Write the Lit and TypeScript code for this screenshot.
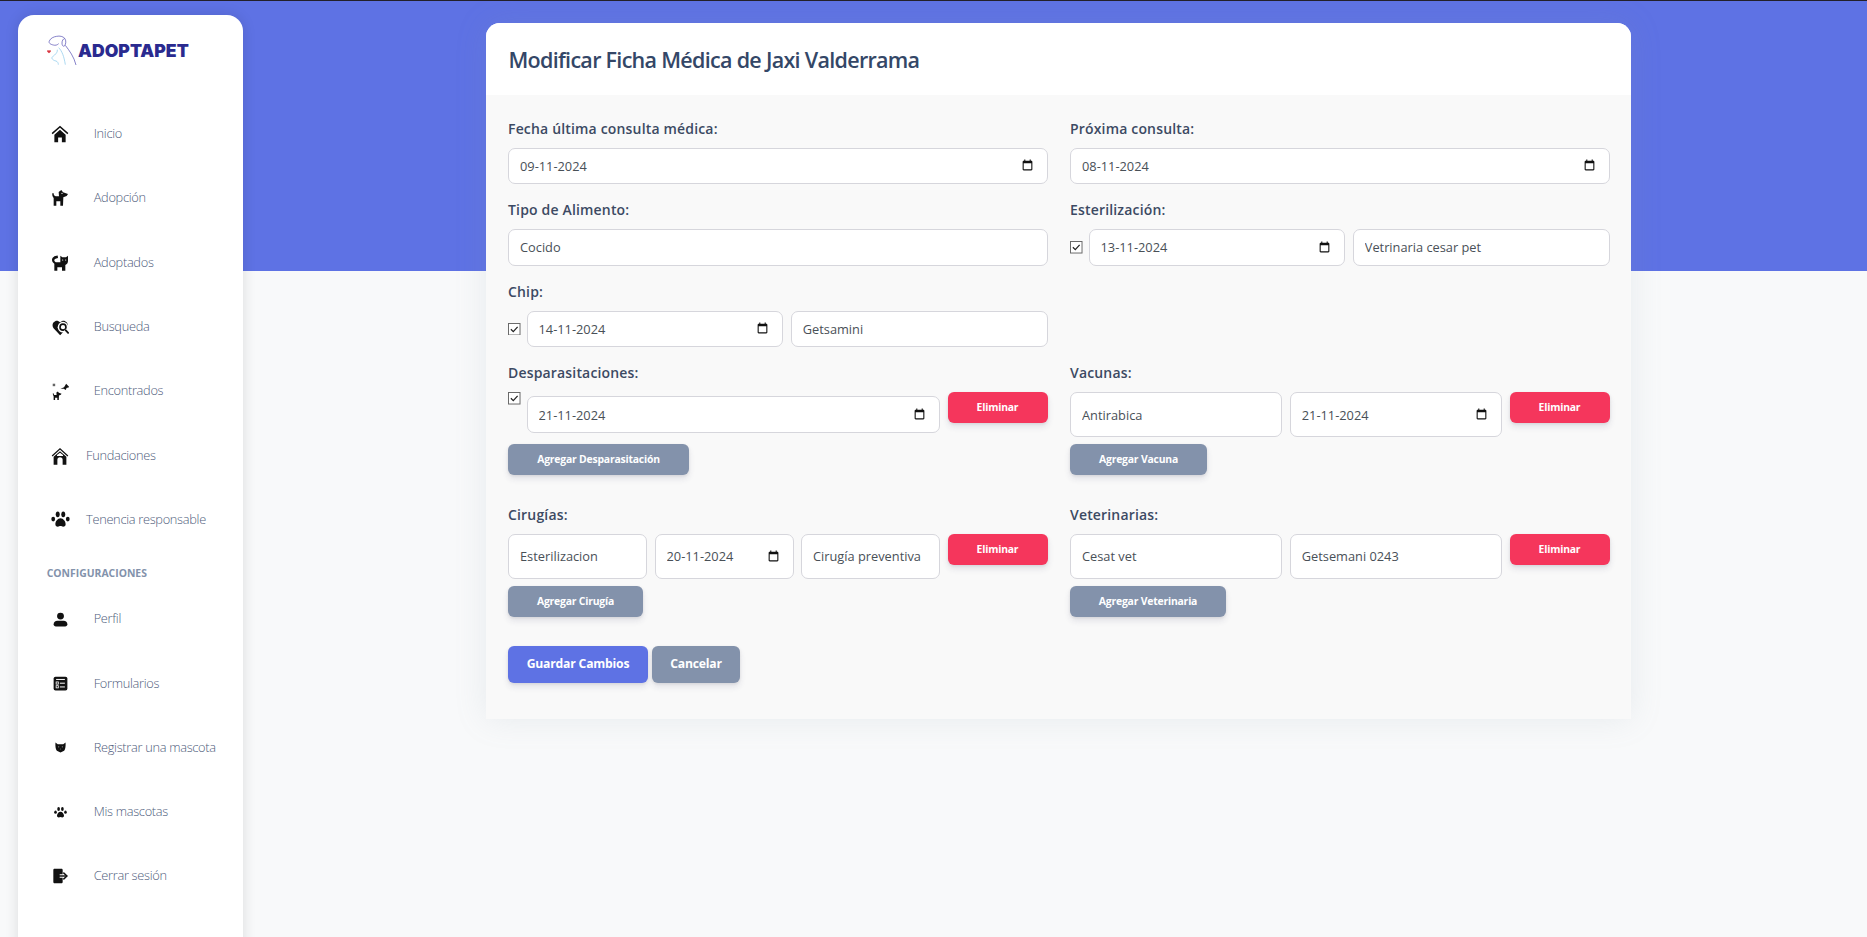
import { LitElement, html, css, svg } from "lit";
import { customElement } from "lit/decorators.js";

const DOG = "M.5 5 2.200 4.500C2.500 7 3.500 9.500 6 9.500h4.500L10 3l4-3 2.500 3.500L24 6l-2 3-5 2-.5 12.500h-4V17h-6v6.500h-4V12C1 10.500 0 8 .5 5z";

const ICONS: Record<string, any> = {
  home: svg`<path d="M1.500 11.500 12 2.200l10.500 9.300" fill="none" stroke="#111" stroke-width="2"/><path d="M4.500 13 12 6.300 19.500 13v10h-5v-6.500h-5V23h-5z" fill="#111"/>`,
  dog: svg`<path d=${DOG} fill="#111"/><circle cx="15" cy="5" r="1" fill="#fff"/>`,
  cat: svg`<path d="M8.500.8C3.500 1 0 4 0 7.500 0 10 2 12 3.500 13v10.500H8v-5h7v5h5V15c2.500-1 4-3 4-6V1l-3 2.500h-5.500l-3-2.500v10H7c-2 0-3-1.500-3.500-2.500C3 7 5 5 9 4.500z" fill="#111"/><circle cx="16" cy="7.500" r=".9" fill="#fff"/><circle cx="20.500" cy="7.500" r=".9" fill="#fff"/>`,
  search: svg`<path d="M11.500 23 2.500 13.500C-.5 10 .5 4.500 4.500 3c2.500-1 5-.2 7 2 2-2.200 4.500-3 7-2 4 1.500 5 7 2 10.500z" fill="#111"/><circle cx="15.500" cy="11.500" r="7.500" fill="#fff"/><circle cx="15.500" cy="11.500" r="4.200" fill="none" stroke="#111" stroke-width="2.300"/><path d="m18.500 15 5 5.500" stroke="#fff" stroke-width="4.500"/><path d="m18.500 15 5 5.500" stroke="#111" stroke-width="2.500"/>`,
  found: svg`<path d=${DOG} transform="translate(1 12) scale(.52)" fill="#111"/><path d="M12 8l5-2 3-5 2 2 2.500 3-4 1-1 3-3-2z" fill="#111"/><rect x="1" y="1" width="3.500" height="3.500" fill="#666"/>`,
  house: svg`<path d="M1.500 12 12 2.500 22.500 12" fill="none" stroke="#111" stroke-width="1.700"/><path fill-rule="evenodd" d="M3.500 13 12 5.500 20.500 13V23.500h-5V17a3.500 3.500 0 0 0-7 0v6.500h-5zM8 12h8v-1.300l-4-3.200-4 3.200z" fill="#111"/>`,
  paw: svg`<ellipse cx="8.500" cy="5.500" rx="2.500" ry="3.700" fill="#111"/><ellipse cx="15.500" cy="5.500" rx="2.500" ry="3.700" fill="#111"/><ellipse cx="2.800" cy="11.500" rx="2.400" ry="3" fill="#111"/><ellipse cx="21.200" cy="11.500" rx="2.400" ry="3" fill="#111"/><path d="M12 10.500c3.500 0 6.500 4 6.500 7.500 0 2.500-2 3-3 3-1.500 0-2.200-.7-3.500-.7S10 21 8.500 21c-1 0-3-.5-3-3 0-3.500 3-7.500 6.500-7.500z" fill="#111"/>`,
  user: svg`<circle cx="12" cy="6.500" r="5.500" fill="#111"/><path d="M7 14h10c3.500 0 6 2.500 6 5.500 0 2.200-1.500 3.500-3.500 3.500h-15C2.500 23 1 21.700 1 19.500 1 16.500 3.500 14 7 14z" fill="#111"/>`,
  form: svg`<rect x="1" y="1" width="22" height="22" rx="3" fill="#111"/><path d="M5 5.500h14" stroke="#fff" stroke-width="1.600"/><rect x="5" y="9.500" width="3.500" height="3.500" fill="none" stroke="#fff" stroke-width="1.300"/><rect x="5" y="15.500" width="3.500" height="3.500" fill="none" stroke="#fff" stroke-width="1.300"/><path d="M11 11.500h8M11 17.500h8" stroke="#fff" stroke-width="1.600"/>`,
  shield: svg`<path d="M1 1l5 4h12l5-4c.5 8 0 14-3 18l-8 4-8-4C1 15 .5 9 1 1z" fill="#111"/><circle cx="8" cy="10.500" r="1.300" fill="#999"/><circle cx="16" cy="10.500" r="1.300" fill="#999"/><path d="M12 14v3" stroke="#777" stroke-width="1.200"/>`,
  exit: svg`<path d="M4 1h10c1.200 0 2 .8 2 2v6.500h-4.500v5H16V21c0 1.200-.8 2-2 2H4c-1.200 0-2-.8-2-2V3c0-1.200.8-2 2-2z" fill="#111"/><path d="M10 12h11" stroke="#111" stroke-width="2.200"/><path d="m17 7 5.500 5-5.500 5" fill="none" stroke="#111" stroke-width="2.200"/>`,
};

const MAIN = [
  { t: "Inicio", i: "home", s: 18 },
  { t: "Adopción", i: "dog", s: 16 },
  { t: "Adoptados", i: "cat", s: 16 },
  { t: "Busqueda", i: "search", s: 17 },
  { t: "Encontrados", i: "found", s: 17 },
  { t: "Fundaciones", i: "house", s: 18, near: true },
  { t: "Tenencia responsable", i: "paw", s: 19, near: true },
];
const CONF = [
  { t: "Perfil", i: "user", s: 15 },
  { t: "Formularios", i: "form", s: 15 },
  { t: "Registrar una mascota", i: "shield", s: 11 },
  { t: "Mis mascotas", i: "paw", s: 13 },
  { t: "Cerrar sesión", i: "exit", s: 16 },
];

@customElement("app-root")
export class AppRoot extends LitElement {
  static styles = css`
    :host {
      display: flex;
      align-items: stretch;
      box-sizing: border-box;
      height: 100vh;
      overflow: hidden;
      border-top: 1px solid #23202a;
      padding-top: 14px;
      background: linear-gradient(#5e72e4 270px, #f8f9fa 270px);
      font-family: "Open Sans", sans-serif;
    }
    * { box-sizing: border-box; }
    .side {
      flex: none;
      width: 225px;
      margin: 0 0 -30px 18px;
      background: #fff;
      border-radius: 16px;
      box-shadow: 0 0 14px rgba(0, 0, 0, 0.12);
    }
    .logo {
      display: flex;
      align-items: flex-start;
      height: 86px;
      padding: 18px 0 0 28px;
    }
    .logo svg { display: block; width: 32px; height: 42px; flex: none; }
    .logo span {
      font-family: "Inter", sans-serif;
      font-weight: 900;
      font-size: 17.6px;
      line-height: 20px;
      color: #2a2a8f;
      margin-top: 8px;
    }
    .nav-row { display: flex; align-items: center; height: 64.3px; padding-left: 28px; }
    .ico { flex: none; width: 28px; display: flex; justify-content: center; padding-top: 2px; }
    .ico svg { display: block; }
    .nav-row span {
      margin-left: 19.7px;
      font-size: 12.8px;
      font-weight: 300;
      letter-spacing: -0.3px;
      color: #4f5d7c;
      white-space: nowrap;
    }
    .nav-row.near span { margin-left: 12px; }
    .conf {
      height: 35px;
      padding: 14px 0 0 28.7px;
      font-size: 10.4px;
      line-height: 16px;
      font-weight: 700;
      color: #8392ab;
      text-transform: uppercase;
    }
    .card {
      flex: none;
      align-self: flex-start;
      width: 1145px;
      margin: 8px 0 0 243px;
      border-radius: 14px 14px 0 0;
      overflow: hidden;
      background: #f9f9f9;
      box-shadow: 0 0 32px rgba(136, 152, 170, 0.15);
    }
    .head { height: 72px; background: #fff; display: flex; align-items: center; padding: 0 22.5px; }
    h1 { margin: 0; font-size: 21.5px; font-weight: 600; color: #344767; letter-spacing: -0.7px; }
    .body { padding: 23.5px 21px 36px 22px; }
    .grid { display: grid; grid-template-columns: 539.5px 539.5px; column-gap: 22.5px; row-gap: 16px; }
    .grid.tall { row-gap: 29.5px; margin-top: 16px; }
    .empty { visibility: hidden; }
    label { display: block; font-size: 14px; letter-spacing: 0.17px; font-weight: 600; line-height: 20px; margin-bottom: 9px; color: #3c4a63; }
    .line { display: flex; align-items: center; gap: 7.5px; }
    .line.top { align-items: flex-start; height: 45px; }
    .line.top .mid { align-self: center; }
    .box {
      flex: 1 1 0;
      min-width: 0;
      height: 36.5px;
      display: flex;
      align-items: center;
      background: #fff;
      border: 1px solid #d6d6dc;
      border-radius: 7px;
      padding: 0 13px 0 11px;
    }
    .box.big { height: 45px; }
    .box.mid { height: 37px; }
    .box input {
      flex: 1 1 0;
      min-width: 0;
      border: 0;
      padding: 0;
      outline: 0;
      background: none;
      font: 400 12.8px "Open Sans", sans-serif;
      color: #495057;
    }
    .box svg { flex: none; display: block; width: 13px; height: 13px; }
    .check { flex: none; width: 12.5px; height: 12.5px; margin-right: -1.5px; display: block; }
    .line .check .check { margin: 0; }
    button {
      flex: none;
      border: 0;
      border-radius: 6px;
      color: #fff;
      font-family: "Open Sans", sans-serif;
      font-weight: 700;
      font-size: 10.4px;
      letter-spacing: -0.2px;
      height: 31px;
      padding: 0 0 1px;
      box-shadow: 0 4px 6px rgba(50, 50, 93, 0.11), 0 1px 3px rgba(0, 0, 0, 0.08);
    }
    .del { width: 100px; background: #f5365c; }
    .add { display: block; margin-top: 7px; background: #8392ab; }
    .actions { display: flex; gap: 4px; margin-top: 29.5px; }
    .actions button { height: 36.7px; font-size: 12.2px; border-radius: 6px; }
    .save { width: 140px; background: #5e72e4; }
    .cancel { width: 88px; background: #8392ab; }
  `;

  private navRow(n: any) {
    return html`<div class="nav-row ${n.near ? "near" : ""}">
      <div class="ico"><svg viewBox="0 0 24 24" width=${n.s} height=${n.s}>${ICONS[n.i]}</svg></div>
      <span>${n.t}</span>
    </div>`;
  }
  private text(v: string, cls = "") {
    return html`<div class="box ${cls}"><input .value=${v} readonly /></div>`;
  }
  private date(v: string, cls = "") {
    return html`<div class="box ${cls}"><input .value=${v} readonly />
      <svg viewBox="0 0 24 24"><path fill="#111" d="M19 3h-1V1h-2v2H8V1H6v2H5c-1.110 0-1.990.9-1.990 2L3 19c0 1.100.89 2 2 2h14c1.100 0 2-.9 2-2V5c0-1.100-.9-2-2-2zm0 16H5V8h14v11z"/></svg></div>`;
  }
  private check() {
    return html`<svg class="check" viewBox="0 0 13 13"><rect x=".5" y=".5" width="12" height="12" fill="#fff" stroke="#666"/><path d="m3 6.500 2.500 2.500L10 4" fill="none" stroke="#222" stroke-width="1.300"/></svg>`;
  }

  render() {
    return html`
      <aside class="side">
        <div class="logo">
          <svg viewBox="18 40 96 126">
            <g fill="none" stroke="#5a55b5" stroke-width="2.200">
              <path d="M28 64c3-8 13-13 22-14 9-2 19 0 24 6 5 6 4 17 0 22-4 4-8 0-8-8s4-12 8-14" />
              <path d="M28 64c-3 6 3 10 12 12 6 2 12 0 16-4" />
              <path d="M76 77c12 16 26 34 32 59" />
            </g>
            <g fill="none" stroke="#8ecbec" stroke-width="2.200">
              <path d="M52 90c1 7-4 12-8 16-3 2-6 4-9 9 3 6 8 8 13 9 5 2 7 6 7 11" />
              <path d="M56 84c10 10 16 26 20 51" />
            </g>
            <path d="M27 101l-5-5c-2-3 1-6 5-3 4-3 7 0 5 3z" fill="#d8343e" />
          </svg>
          <span>ADOPTAPET</span>
        </div>
        ${MAIN.map((n) => this.navRow(n))}
        <div class="conf">Configuraciones</div>
        ${CONF.map((n) => this.navRow(n))}
      </aside>
      <section class="card">
        <div class="head"><h1>Modificar Ficha Médica de Jaxi Valderrama</h1></div>
        <div class="body">
          <div class="grid">
            <div><label>Fecha última consulta médica:</label><div class="line">${this.date("09-11-2024")}</div></div>
            <div><label>Próxima consulta:</label><div class="line">${this.date("08-11-2024")}</div></div>
            <div><label>Tipo de Alimento:</label><div class="line">${this.text("Cocido")}</div></div>
            <div><label>Esterilización:</label><div class="line">${this.check()}${this.date("13-11-2024")}${this.text("Vetrinaria cesar pet")}</div></div>
            <div><label>Chip:</label><div class="line">${this.check()}${this.date("14-11-2024")}${this.text("Getsamini")}</div></div>
            <div class="empty"></div>
          </div>
          <div class="grid tall">
            <div>
              <label>Desparasitaciones:</label>
              <div class="line top">
                ${this.check()}${this.date("21-11-2024", "mid")}
                <button class="del">Eliminar</button>
              </div>
              <button class="add" style="width:181px">Agregar Desparasitación</button>
            </div>
            <div>
              <label>Vacunas:</label>
              <div class="line top">${this.text("Antirabica", "big")}${this.date("21-11-2024", "big")}<button class="del">Eliminar</button></div>
              <button class="add" style="width:137px">Agregar Vacuna</button>
            </div>
            <div>
              <label>Cirugías:</label>
              <div class="line top">${this.text("Esterilizacion", "big")}${this.date("20-11-2024", "big")}${this.text("Cirugía preventiva", "big")}<button class="del">Eliminar</button></div>
              <button class="add" style="width:135px">Agregar Cirugía</button>
            </div>
            <div>
              <label>Veterinarias:</label>
              <div class="line top">${this.text("Cesat vet", "big")}${this.text("Getsemani 0243", "big")}<button class="del">Eliminar</button></div>
              <button class="add" style="width:156px">Agregar Veterinaria</button>
            </div>
          </div>
          <div class="actions">
            <button class="save">Guardar Cambios</button>
            <button class="cancel">Cancelar</button>
          </div>
        </div>
      </section>
    `;
  }
}
